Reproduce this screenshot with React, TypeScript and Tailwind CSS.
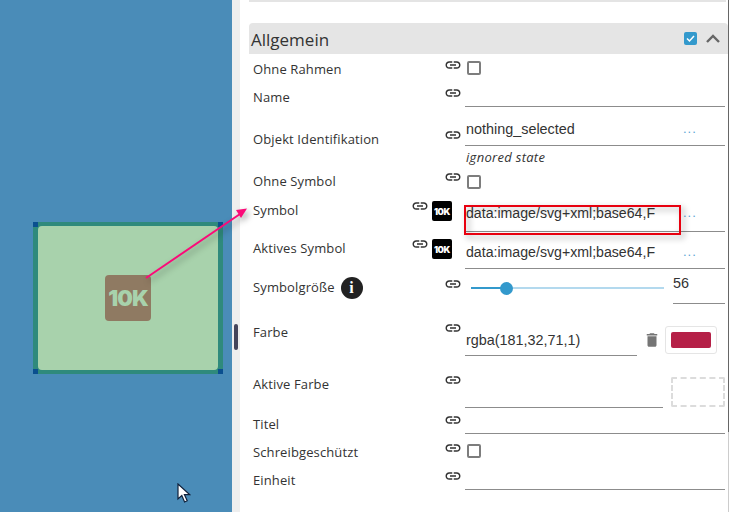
import type { ReactNode } from "react";

const LINK =
  "M3.9 12c0-1.71 1.39-3.1 3.1-3.1h4V7H7c-2.76 0-5 2.24-5 5s2.24 5 5 5h4v-1.9H7c-1.71 0-3.1-1.39-3.1-3.1zM8 13h8v-2H8v2zm9-6h-4v1.9h4c1.71 0 3.1 1.39 3.1 3.1s-1.39 3.1-3.1 3.1h-4V17h4c2.76 0 5-2.24 5-5s-2.24-5-5-5z";

function LinkIcon({ className = "" }: { className?: string }) {
  return (
    <div className={`w-[18px] shrink-0 ${className}`}>
      <svg viewBox="0 0 24 24" className="block h-[18px] w-[18px] fill-[#333]">
        <path d={LINK} />
      </svg>
    </div>
  );
}

function Check({ className = "" }: { className?: string }) {
  return <div className={`h-[14px] w-[14px] shrink-0 rounded-[2px] border-2 border-[#7d7d7d] bg-white ${className}`} />;
}

function Label({ className = "w-[191px]", children }: { className?: string; children: ReactNode }) {
  return (
    <div className={`shrink-0 text-[13px] leading-[18px] tracking-[0.12px] text-[#333] ${className}`}>{children}</div>
  );
}

function Field({
  className = "",
  text,
  dots,
  textSize = "text-[14.4px]",
}: {
  className?: string;
  text?: string;
  dots?: boolean;
  textSize?: string;
}) {
  return (
    <div
      className={`flex border-b border-[#8c8c8c] font-['Liberation_Sans',sans-serif] leading-[20px] text-[#333] ${className}`}
    >
      <div className={`overflow-hidden whitespace-nowrap pl-px ${textSize} ${dots ? "w-[218px] shrink-0" : "flex-1"}`}>
        {text}
      </div>
      {dots && <div className="text-[13px] tracking-[1px] text-[#5aa5d5]">...</div>}
    </div>
  );
}

function TenK() {
  return (
    <div className="ml-[3px] flex h-[20px] w-[20px] shrink-0 items-center justify-center rounded-[2px] bg-black font-['Inter',sans-serif] text-[9px] font-black leading-none tracking-[-0.4px] text-white">
      10K
    </div>
  );
}

export default function App() {
  return (
    <div className="relative flex h-[512px] w-[729px] overflow-hidden bg-white font-['Open_Sans',sans-serif]">
      {/* canvas */}
      <div className="w-[232px] shrink-0 bg-[#4a8cb8] pl-[33px] pt-[222px]">
        <div className="relative h-[152px] w-[190px] bg-[#2f8a7c] px-[5px] pb-[4px] pt-[4px]">
          <div className="flex h-full w-full items-center justify-center rounded-[4px] bg-[#a8d2ac]">
            <div className="flex h-[46px] w-[46px] items-center justify-center rounded-[4px] bg-[#8f7a62] font-['Inter',sans-serif] text-[22px] font-black leading-none tracking-[-1px] text-[#a8d2ac]">
              10K
            </div>
          </div>
          <div className="absolute left-0 top-0 h-[5px] w-[5px] bg-[#0a4f8f]" />
          <div className="absolute right-0 top-0 h-[5px] w-[5px] bg-[#0a4f8f]" />
          <div className="absolute bottom-0 left-0 h-[5px] w-[5px] bg-[#0a4f8f]" />
          <div className="absolute bottom-0 right-0 h-[5px] w-[5px] bg-[#0a4f8f]" />
        </div>
      </div>

      {/* splitter */}
      <div className="flex w-[8px] shrink-0 items-start bg-[#eeeeee] pl-[2px] pt-[324px]">
        <div className="h-[26px] w-[4px] rounded-[2px] bg-[#44445a]" />
      </div>

      {/* properties */}
      <div className="min-w-0 flex-1 pl-[9px]">
        <div className="mr-[2px] h-[2px] bg-[#e4e4e4]" />
        <div className="mt-[21px] flex h-[31px] items-center rounded-t-[4px] bg-[#e5e5e5] pl-[2px] pr-[8px]">
          <div className="flex-1 pt-[2px] text-[17px] leading-[24px] text-[#333]">Allgemein</div>
          <div className="flex h-[13px] w-[13px] items-center justify-center rounded-[2px] bg-[#3399cc]">
            <svg viewBox="0 0 13 13" className="h-[13px] w-[13px]">
              <path d="M3 6.5l2.5 2.5L10 4" fill="none" stroke="#fff" strokeWidth="1.5" />
            </svg>
          </div>
          <svg viewBox="0 0 14 9" className="ml-[9px] h-[9px] w-[14px]">
            <path d="M1 8l6-6 6 6" fill="none" stroke="#666" strokeWidth="2.4" />
          </svg>
        </div>

        <div className="pl-[4px]">
          <div className="flex h-[29px]">
            <Label className="w-[191px] pt-[6px]">Ohne Rahmen</Label>
            <LinkIcon className="pt-[2px]" />
            <div className="ml-[5px] pt-[7px]">
              <Check />
            </div>
          </div>

          <div className="flex h-[28px]">
            <Label className="w-[191px] pt-[5px]">Name</Label>
            <LinkIcon className="pt-[1px]" />
            <Field className="ml-[3px] h-[24px] w-[260px]" />
          </div>

          <div className="flex h-[56px]">
            <Label className="w-[191px] pt-[19px]">Objekt Identifikation</Label>
            <LinkIcon className="pt-[15px]" />
            <div className="w-[263px]">
              <Field className="ml-[3px] h-[35px] w-[260px] pt-[8px]" text="nothing_selected" dots />
              <div className="ml-[4px] mt-[3px] text-[13px] italic leading-[16px] tracking-[0.3px] text-[#333]">
                ignored state
              </div>
            </div>
          </div>

          <div className="flex h-[29px]">
            <Label className="w-[191px] pt-[5px]">Ohne Symbol</Label>
            <LinkIcon className="pt-[1px]" />
            <div className="ml-[5px] pt-[8px]">
              <Check />
            </div>
          </div>

          <div className="flex h-[38px]">
            <Label className="w-[158px] pt-[5px]">Symbol</Label>
            <LinkIcon className="pt-[1px]" />
            <div className="pt-[5px]">
              <TenK />
            </div>
            <Field
              className="ml-[13px] h-[36px] w-[260px] pt-[7px]"
              text="data:image/svg+xml;base64,F"
              textSize="text-[14.15px]"
              dots
            />
          </div>

          <div className="flex h-[39px]">
            <Label className="w-[158px] pt-[5px]">Aktives Symbol</Label>
            <LinkIcon className="pt-[1px]" />
            <div className="pt-[5px]">
              <TenK />
            </div>
            <Field
              className="ml-[13px] h-[35px] w-[260px] pt-[8px]"
              text="data:image/svg+xml;base64,F"
              textSize="text-[14.15px]"
              dots
            />
          </div>

          <div className="flex h-[37px]">
            <Label className="flex w-[191px] items-start gap-[6px] pt-[5px]">
              Symbolgröße
              <span className="mt-[-1px] flex h-[22px] w-[22px] items-center justify-center rounded-full bg-[#222] font-['Liberation_Serif',serif] text-[16px] font-bold text-white">
                i
              </span>
            </Label>
            <LinkIcon className="pt-[2px]" />
            <div className="relative ml-[9px] mt-[14px] flex h-[2px] w-[193px]">
              <div className="w-[36px] bg-[#3399cc]" />
              <div className="flex-1 bg-[#b3d9ee]" />
              <div className="absolute left-[29px] top-[-5.5px] h-[13px] w-[13px] rounded-full bg-[#3399cc]" />
            </div>
            <div className="ml-[9px] h-[31px] w-[52px] border-b border-[#8c8c8c] font-['Liberation_Sans',sans-serif] text-[14.4px] leading-[20px] text-[#333]">
              56
            </div>
          </div>

          <div className="flex h-[52px]">
            <Label className="w-[191px] pt-[13px]">Farbe</Label>
            <LinkIcon className="pt-[9px]" />
            <Field className="ml-[3px] h-[46px] w-[172px] pt-[20px]" text="rgba(181,32,71,1)" />
            <div className="ml-[6px] pt-[21px]">
              <svg viewBox="0 0 24 24" className="block h-[18px] w-[18px] fill-[#757575]">
                <path d="M6 19c0 1.1.9 2 2 2h8c1.1 0 2-.9 2-2V7H6v12zM19 4h-3.5l-1-1h-5l-1 1H5v2h14V4z" />
              </svg>
            </div>
            <div className="ml-[4px] mt-[16px] h-[28px] w-[52px] rounded-[3px] border border-[#e5e5e5] p-[5px]">
              <div className="h-full w-full rounded-[2px] bg-[#b52047]" />
            </div>
          </div>

          <div className="flex h-[46px]">
            <Label className="w-[191px] pt-[13px]">Aktive Farbe</Label>
            <LinkIcon className="pt-[9px]" />
            <Field className="ml-[3px] h-[46px] w-[198px]" />
            <div className="ml-[8px] mt-[15px] h-[30px] w-[54px] rounded-[2px] border-2 border-dashed border-[#dcdcdc]" />
          </div>

          <div className="flex h-[26px]">
            <Label className="w-[191px] pt-[7px]">Titel</Label>
            <LinkIcon className="pt-[3px]" />
            <Field className="ml-[3px] h-[26px] w-[260px]" />
          </div>

          <div className="flex h-[28px]">
            <Label className="w-[191px] pt-[9px]">Schreibgeschützt</Label>
            <LinkIcon className="pt-[5px]" />
            <div className="ml-[5px] pt-[10px]">
              <Check />
            </div>
          </div>

          <div className="flex h-[28px]">
            <Label className="w-[191px] pt-[9px]">Einheit</Label>
            <LinkIcon className="pt-[5px]" />
            <Field className="ml-[3px] h-[28px] w-[260px]" />
          </div>
        </div>
      </div>

      {/* scrollbar edge */}
      <div className="flex w-px shrink-0 flex-col">
        <div className="h-[432px] bg-[#666]" />
        <div className="flex-1 bg-[#ccc]" />
      </div>

      {/* annotation overlay */}
      <svg
        viewBox="0 0 729 512"
        className="pointer-events-none absolute left-0 top-0 h-[512px] w-[729px] drop-shadow-[3px_3px_3px_rgba(0,0,0,0.35)]"
      >
        <path d="M146 278L240 214" stroke="#fb0a78" strokeWidth="2" fill="none" />
        <path d="M247 208.5L236 210L241 218Z" fill="#fb0a78" />
        <rect x="465" y="206" width="215" height="28" fill="none" stroke="#e8000f" strokeWidth="2" />
      </svg>

      {/* mouse pointer */}
      <svg viewBox="0 0 14 20" className="absolute left-[177px] top-[483px] h-[20px] w-[14px]">
        <path
          d="M1 1v15l3.8-3.5L7.6 19l2.6-1.2-2.8-6.2h5.2z"
          fill="#fff"
          stroke="#10203a"
          strokeWidth="1.2"
        />
      </svg>
    </div>
  );
}
